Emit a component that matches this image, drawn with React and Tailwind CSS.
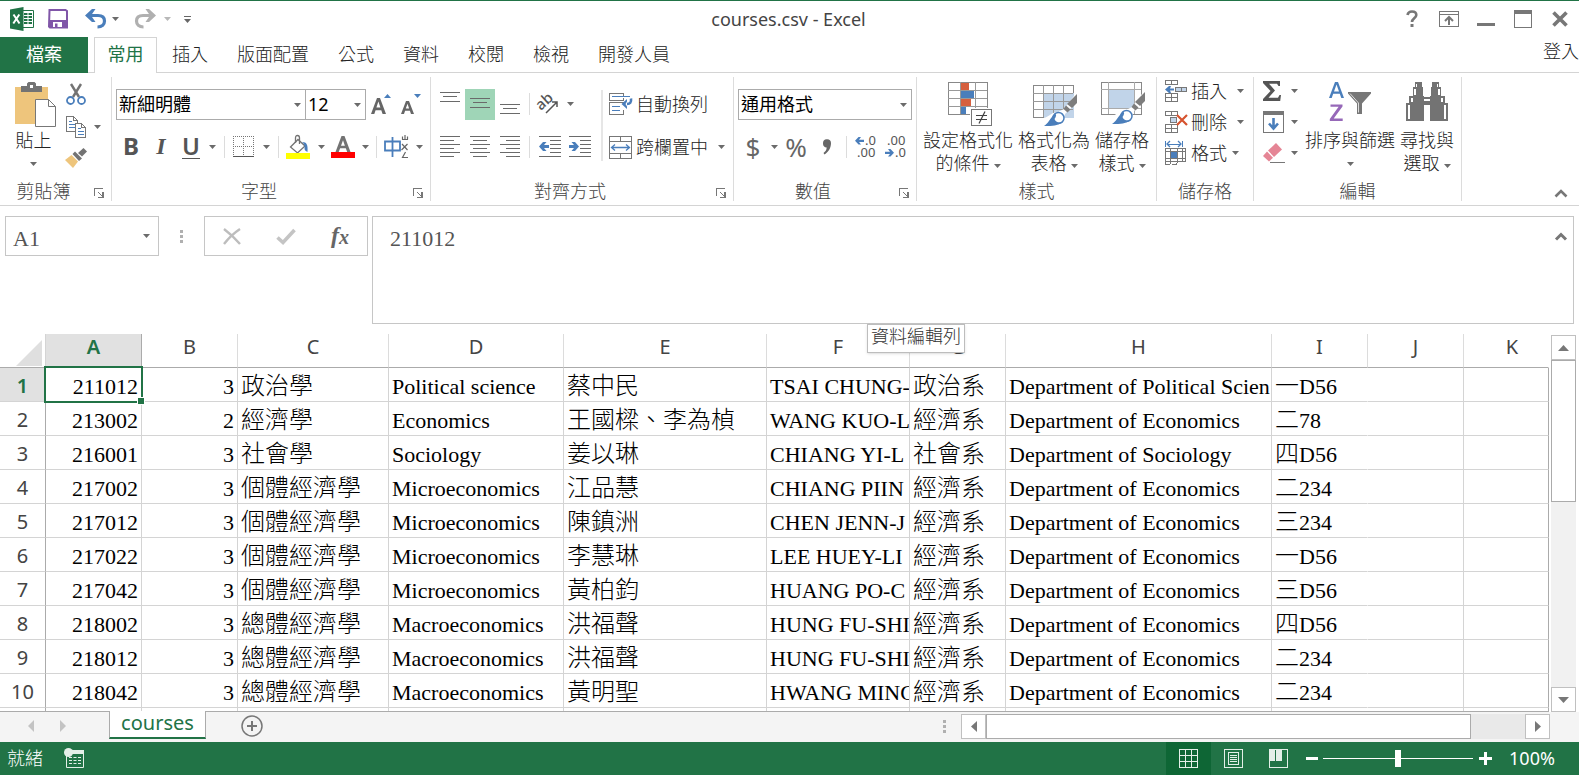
import React from "react";

const ui = "font-['Noto_Sans','Noto_Sans_CJK_TC',sans-serif]";
const serif = "font-['Liberation_Serif','Noto_Sans_CJK_TC',serif]";

/* ---------- small building blocks ---------- */

const Svg = ({ w, h, crisp, children, className = "" }) => (
  <svg
    width={w}
    height={h}
    viewBox={`0 0 ${w} ${h}`}
    fill="none"
    shapeRendering={crisp ? "crispEdges" : "auto"}
    className={`shrink-0 overflow-visible ${className}`}
    aria-hidden="true"
  >
    {children}
  </svg>
);

const Down = ({ color = "#6b6b6b", className = "" }) => (
  <Svg w={7} h={4} className={className}>
    <path d="M0 0h7L3.5 4z" fill={color} />
  </Svg>
);

const IconButton = ({ label, className = "", children }) => (
  <button type="button" aria-label={label} className={`flex shrink-0 items-center justify-center ${className}`}>
    {children}
  </button>
);

const Rule = ({ className = "w-2" }) => (
  <span className={`flex h-[22px] shrink-0 justify-center ${className}`}>
    <span className="w-px bg-[#dcdcdc]" />
  </span>
);

const Group = ({ name, launcher, className, children }) => (
  <section aria-label={name} className={`flex h-[124px] shrink-0 flex-col border-r border-[#dcdcdc] ${className}`}>
    <div className="h-[105px]">{children}</div>
    <div className="flex h-[19px] items-center">
      <span className="flex-1 text-center text-lg font-light leading-[19px] text-[#444]">{name}</span>
      {launcher && (
        <IconButton label={`${name} options`} className="mt-[2px] h-4 w-6">
          <Svg w={10} h={10} crisp>
            <path d="M.5 8V.5H9" stroke="#777" />
            <path d="M4 4l4 4" stroke="#777" shapeRendering="auto" />
            <path d="M9.5 4v6H4V9h4V4z" fill="#777" />
          </Svg>
        </IconButton>
      )}
    </div>
  </section>
);

const BigButton = ({ icon, lines, arrowBelow, className }) => (
  <button type="button" className={`flex shrink-0 flex-col items-center text-lg font-light leading-[23px] text-[#222] ${className}`}>
    <span className="flex h-[47px] items-start">{icon}</span>
    <span className="whitespace-nowrap">{lines[0]}</span>
    <span className="flex h-[23px] items-center gap-1 whitespace-nowrap">
      {lines[1]}
      {arrowBelow ? <Down /> : <Down className="mt-1" />}
    </span>
  </button>
);

/* ---------- icons ---------- */

const ExcelLogo = () => (
  <Svg w={24} h={24}>
    <path d="M13 3.5h10.5v17H13" stroke="#217346" fill="#fff" />
    <path d="M14 6h3.5v2H14zm4.500 0h3.500v2h-3.500zM14 9h3.500v2H14zm4.500 0h3.500v2h-3.500zM14 12h3.500v2H14zm4.500 0h3.500v2h-3.500zM14 15h3.500v2H14zm4.500 0h3.500v2h-3.500z" fill="#217346" />
    <path d="M0 2.500L13.500 0v24L0 21.500z" fill="#217346" />
    <path d="M3.500 7.500l6 9M9.300 7.500l-6 9" stroke="#fff" strokeWidth="2" />
  </Svg>
);

const Save = () => (
  <Svg w={20} h={20}>
    <path d="M1.500 1h16l1.500 1v16.500H2l-1-1z" stroke="#8056a8" strokeWidth="2" fill="#fff" />
    <path d="M1 11h18v8H1z" fill="#8056a8" />
    <path d="M5 13h9v5H5z" fill="#fff" />
    <path d="M7 14.500h2.500V18H7z" fill="#8056a8" />
  </Svg>
);

const Undo = ({ color, flip }) => (
  <Svg w={22} h={20} className={flip ? "-scale-x-100" : ""}>
    <path d="M3 6.500h10c4.500 0 6.500 2.500 6.500 5.500 0 3.500-2.500 6-7 6" stroke={color} strokeWidth="3.200" />
    <path d="M0 6.500L7 0h3.500L6 6.500l4.500 6.500H7z" fill={color} />
  </Svg>
);

const Paste = () => (
  <Svg w={42} h={46}>
    <path d="M0 5h33v37H0z" fill="#eec57c" />
    <path d="M6 10V4h6V1.500L13.500 0h6L21 1.500V4h6v6z" fill="#737373" />
    <path d="M15 3h3v3h-3z" fill="#fff" />
    <path d="M20.500 17.500h13l7 7v20h-20z" fill="#fff" stroke="#777" />
    <path d="M33.500 17.500v7h7" stroke="#777" />
  </Svg>
);

const Scissors = () => (
  <Svg w={20} h={22}>
    <path d="M5 1l8 13M15 1L7 14" stroke="#737373" strokeWidth="2.400" />
    <circle cx="4.500" cy="17.500" r="3.500" stroke="#4a7ebb" strokeWidth="1.800" />
    <circle cx="15.500" cy="17.500" r="3.500" stroke="#4a7ebb" strokeWidth="1.800" />
  </Svg>
);

const Copy = () => (
  <Svg w={21} h={22} crisp>
    <path d="M.5.5h7l4 4v11H.5z" fill="#fff" stroke="#777" />
    <path d="M7.500.5v4h4" stroke="#777" />
    <path d="M3 5.500h3M3 8.500h6M3 11.500h6" stroke="#4a7ebb" />
    <path d="M9.500 7.500h6l4 4v10h-10z" fill="#fff" stroke="#777" />
    <path d="M15.500 7.500v4h4" stroke="#777" />
    <path d="M12 12.500h3M12 15.500h6M12 18.500h6" stroke="#4a7ebb" />
  </Svg>
);

const FormatBrush = () => (
  <Svg w={22} h={20}>
    <path d="M18.500 0L22 3.500l-5 5L13 5z" fill="#737373" />
    <path d="M10 3.500l7 7-3 2.500-6.500-7z" fill="#737373" />
    <path d="M6.500 7L13 13.500 8 20 0 12z" fill="#eec57c" />
  </Svg>
);

const Lines = ({ rows, h = 22 }) => (
  <Svg w={20} h={h} crisp>
    {rows.map(([x, y, w]) => (
      <rect key={y} x={x} y={y} width={w} height="1" fill="#6a6a6a" />
    ))}
  </Svg>
);

const BorderIcon = () => (
  <Svg w={22} h={22} crisp>
    <path d="M0 .5h21M.5 0v20M20.500 0v20M10.500 0v20M0 10.500h21" stroke="#777" strokeDasharray="1 1" />
    <path d="M0 20.500h21" stroke="#555" />
  </Svg>
);

const FillIcon = () => (
  <Svg w={24} h={25}>
    <path d="M4.500 12L12 4.500l7 6.500-7.500 7z" stroke="#737373" strokeWidth="1.300" fill="#fff" />
    <path d="M9.500 8V3q0-2.500 2-2.500t2 2.500v6" stroke="#737373" strokeWidth="1.300" />
    <path d="M16 7c5 0 6 3 5.500 10-1-1-2.500-1-3-3 .5-3 0-5-2.500-7z" fill="#4a7ebb" />
    <path d="M0 18h24v6H0z" fill="#ff0" />
  </Svg>
);

const FontColor = () => (
  <Svg w={24} h={24}>
    <path d="M4.500 17L10.500 1h3l6 16h-3.300l-1.400-3.800H9.100L7.700 17zM10 10.700h3.900L12 5.300z" fill="#737373" />
    <path d="M0 17h24v6H0z" fill="#f00" />
  </Svg>
);

const Orientation = () => (
  <Svg w={22} h={22}>
    <text x="-1" y="14" fontSize="15" fontFamily="Noto Sans" fontWeight="500" fill="#555" transform="rotate(-42 6 11)">ab</text>
    <path d="M8 20L18.500 9.500M14 9h5v5" stroke="#555" strokeWidth="1.500" />
  </Svg>
);

const Indent = ({ right }) => (
  <Svg w={22} h={22} crisp>
    <path d="M0 .5h22M11 4.500h11M11 8.500h11M11 12.500h11M11 16.500h11M0 20.500h22" stroke="#6a6a6a" />
    {right ? (
      <path d="M0 9h5L2.500 6H6l4 4.500L6 15H2.500L5 12H0z" fill="#4a7ebb" shapeRendering="auto" />
    ) : (
      <path d="M10 9H5l2.500-3H4L0 10.500 4 15h3.500L5 12h5z" fill="#4a7ebb" shapeRendering="auto" />
    )}
  </Svg>
);

const Wrap = () => (
  <Svg w={24} h={22}>
    <g shapeRendering="crispEdges">
      <path d="M14.500 3V.5H.5v7h14V5M14.500 12V9.500H.5v12h14V17" stroke="#777" />
      <path d="M3 3.500h18M3 13.500h8M3 17.500h8" stroke="#4a7ebb" />
    </g>
    <path d="M22 5.500c.5 4-1 5.500-4 5.500" stroke="#4a7ebb" strokeWidth="2.600" />
    <path d="M12.500 11L18 6v2.500L16.500 11l1.500 2.500V16z" fill="#4a7ebb" />
  </Svg>
);

const Merge = () => (
  <Svg w={23} h={23}>
    <g shapeRendering="crispEdges" stroke="#777">
      <path d="M.5.5h22v22H.5zM.5 5.500h22M.5 17.500h22M11.500 0v5M11.500 18v5" />
    </g>
    <path d="M3 11.500h17M6 8.500l-3.500 3L6 14.500M17 8.500l3.500 3-3.500 3" stroke="#4a7ebb" strokeWidth="1.300" />
  </Svg>
);

const Decimal = ({ inc }) => (
  <Svg w={24} h={24}>
    <g fontFamily="Noto Sans" fontSize="13" fill="#555">
      <text x={inc ? 11 : 3} y="10">{inc ? ".0" : ".00"}</text>
      <text x={inc ? 3 : 11} y="22">{inc ? ".00" : ".0"}</text>
    </g>
    {inc ? (
      <path d="M10 4.700H5L7 2H4.500L1 5.800l3.500 3.700H7L5 6.900h5z" fill="#4a7ebb" />
    ) : (
      <path d="M1 16.700h5L4 14h2.500l3.500 3.800-3.500 3.700H4l2-2.600H1z" fill="#4a7ebb" />
    )}
  </Svg>
);

const CondFormat = () => (
  <Svg w={40} h={44} crisp>
    <path d="M.5.500h39v32H.5z" fill="#fff" stroke="#888" />
    <path d="M12.500 0v32M27.500 0v32M0 8.500h39M0 16.500h39M0 24.500h39" stroke="#999" />
    <path d="M13 1h8v7h-8zM13 17h10v7H13z" fill="#d6603f" />
    <path d="M13 9h13v7H13zM13 25h5v7h-5z" fill="#4a7ebb" />
    <path d="M22 26h22v18H22z" fill="#fff" />
    <path d="M23.500 27.500h20v16h-20z" fill="#fff" stroke="#777" />
    <path d="M28 33.500h11M28 37.500h11" stroke="#444" />
    <path d="M37 29.500l-6 12" stroke="#444" strokeWidth="1.300" shapeRendering="auto" />
  </Svg>
);

const Brush = () => (
  <g>
    <path d="M11 34c6-2 8-6 14-6l6-3L44 8v10L32 30c0 8-6 12-14 13H9z" fill="#fff" />
    <path d="M44 10v9l-5 5-5-4z" fill="#7d7d7d" />
    <path d="M33 21.500l4.500 4-3 3-4-3.500z" fill="#7d7d7d" />
    <circle cx="25.500" cy="34" r="5.500" fill="#fff" stroke="#4a7ebb" strokeWidth="1.500" />
    <path d="M11 42c4-2 6-8 11-12 2 0 1 3-.5 5 1 3 4 4 7 3-2 3-8 4.500-17.500 4z" fill="#4a7ebb" />
  </g>
);

const FormatTable = () => (
  <Svg w={42} h={45}>
    <g transform="translate(0 2)">
      <g shapeRendering="crispEdges">
        <path d="M.5 1.500h40v32H.5z" fill="#fff" stroke="#888" />
        <path d="M11 9h30v25H11z" fill="#c1d4e9" />
        <path d="M10.500 1v32M20.500 1v32M30.500 1v32M0 9.500h40M0 17.500h40M0 25.500h40" stroke="#999" />
      </g>
      <Brush />
    </g>
  </Svg>
);

const CellStyle = () => (
  <Svg w={42} h={44}>
    <g shapeRendering="crispEdges">
      <path d="M.5.500h40v32H.5z" fill="#fff" stroke="#888" />
      <path d="M8 8h26v18H8z" fill="#c1d4e9" />
      <path d="M7.500 0v32M33.500 0v32M0 7.500h40M0 26.500h40" stroke="#aaa" />
    </g>
    <Brush />
  </Svg>
);

const InsertCells = () => (
  <Svg w={22} h={22} crisp>
    <path d="M.5.500h12v4H.5zM6.500 0v4M.5 13.500h12v8H.5zM.5 17.500h12M6.500 13v8" stroke="#777" />
    <path d="M10.500 7.500h11v4h-11z" fill="#c1d4e9" stroke="#777" />
    <path d="M16.500 7v5" stroke="#777" />
    <path d="M9 8.500H5L6 6H4L0 9.500 4 13h2l-1-2.500h4z" fill="#4a7ebb" shapeRendering="auto" />
  </Svg>
);

const DeleteCells = () => (
  <Svg w={24} h={22} crisp>
    <path d="M.5.500h12v4H.5zM6.500 0v4M.5 13.500h12v8H.5zM.5 17.500h12M6.500 13v8" stroke="#777" />
    <path d="M5.500 6.500h6v5h-6z" fill="#c1d4e9" stroke="#777" />
    <path d="M12 4l10 10M22 4L12 14" stroke="#d6532f" strokeWidth="2.200" shapeRendering="auto" />
  </Svg>
);

const FormatCells = () => (
  <Svg w={22} h={24} crisp>
    <path d="M.5 0v6M17.500 0v6M2 3h14" stroke="#4a7ebb" />
    <path d="M5 0L2 3l3 3M13 0l3 3-3 3" stroke="#4a7ebb" strokeWidth="1.300" shapeRendering="auto" />
    <path d="M.5 7.500h20v13H.5zM5.500 7v13M12.500 7v13M17.500 7v13M0 10.500h21M0 17.500h21M.5 20v3.500h4l2-3M7 23.500h4l2-3" stroke="#777" />
    <path d="M6 11h6v6H6z" fill="#4a7ebb" />
  </Svg>
);

const Sigma = () => (
  <Svg w={18} h={20}>
    <path d="M0 0h17v5h-1.500L14 2.700H6l6 6.800-6.500 7.300H15l1.500-2.800H18L17.200 20H0v-2l7.500-8L0 2z" fill="#555" />
  </Svg>
);

const FillDown = () => (
  <Svg w={21} h={22}>
    <path d="M.5.500h20v21H.5z" stroke="#777" shapeRendering="crispEdges" />
    <path d="M0 0h21v4H0z" fill="#777" />
    <path d="M10.500 7v10M6 12.500l4.500 5 4.500-5" stroke="#4a7ebb" strokeWidth="2.600" />
  </Svg>
);

const Eraser = () => (
  <Svg w={22} h={20}>
    <path d="M13 0l6 6.500L11 14 5 7.500z" fill="#e58595" />
    <path d="M4 8.500l6 6.300L6 18.500l-6-5.500z" fill="#e58595" />
    <path d="M7 19.500h15" stroke="#777" />
  </Svg>
);

const SortFilter = () => (
  <Svg w={42} h={40}>
    <path d="M0 16L6 0h3l6 16h-2.700l-1.500-4.300H4.200L2.700 16zM5 9.400h5L7.500 2.600z" fill="#4a7ebb" />
    <path d="M1.500 22.500h12v2L4.700 36.600h9V39H.8v-2.100l8.800-12.100H1.500z" fill="#9668b8" />
    <path d="M19 10h23v1.500l-9 10V32h-5V21.500l-9-10z" fill="#777" />
    <path d="M21 11.500l8.500 9.500v9.500" stroke="#ddd" />
  </Svg>
);

const Binoculars = () => (
  <Svg w={42} h={40} crisp>
    <path d="M9 0h7v5h1v9h1v1h6v-1h1V5h1V0h7v5h2v9h4v7h3v18H24V23h-6v16H0V21h3v-7h4V5h2z" fill="#737373" />
    <path d="M18 17h6v2h-6z" fill="#fff" />
    <path d="M2 23h2v14H2zM38 23h2v14h-2zM5 16h2v4H5zM35 16h2v4h-2zM8 7h2v6H8zM32 7h2v6h-2zM10 2h1v3h-1zM31 2h1v3h-1z" fill="#fff" />
  </Svg>
);

/* ---------- window parts ---------- */

const TitleBar = () => (
  <header className="relative flex h-[37px] shrink-0 items-center border-t border-[#217346] pl-[10px]">
    <ExcelLogo />
    <IconButton label="儲存" className="ml-[10px] h-7 w-7"><Save /></IconButton>
    <IconButton label="復原" className="ml-3 h-7 w-6"><Undo color="#4a7ebb" /></IconButton>
    <IconButton label="復原選項" className="h-7 w-[15px]"><Down /></IconButton>
    <IconButton label="重做" className="ml-[10px] h-7 w-6"><Undo color="#b0b0b0" flip /></IconButton>
    <IconButton label="重做選項" className="ml-[2px] h-7 w-4"><Down color="#b8b8b8" /></IconButton>
    <IconButton label="自訂快速存取工具列" className="ml-[2px] h-7 w-5">
      <Svg w={7} h={7}><path d="M0 .500h7" stroke="#666" /><path d="M0 3h7L3.500 7z" fill="#666" /></Svg>
    </IconButton>
    <h1 className="pointer-events-none absolute inset-x-0 pr-[2px] text-center text-lg leading-6 text-[#444]">courses.csv - Excel</h1>
    <div className="ml-auto flex items-center pr-px">
      <IconButton label="說明" className="h-7 w-[37px]">
        <Svg w={12} h={18}>
          <path d="M1.500 5C2 2.500 3.500 1.500 6 1.500c2.700 0 4.300 1.300 4.300 3.500 0 3.200-4.300 3.500-4.300 7" stroke="#777" strokeWidth="2.600" />
          <path d="M4.500 14h3v3h-3z" fill="#777" />
        </Svg>
      </IconButton>
      <IconButton label="功能區顯示選項" className="h-7 w-[37px]">
        <Svg w={20} h={16}>
          <path d="M.5.500h19v15H.5zM0 3.500h20" stroke="#777" shapeRendering="crispEdges" />
          <path d="M10 14V7M6 10l4-4 4 4" stroke="#777" strokeWidth="2" />
        </Svg>
      </IconButton>
      <IconButton label="最小化" className="h-7 w-[37px]">
        <Svg w={18} h={16} crisp><path d="M0 12h18v3H0z" fill="#777" /></Svg>
      </IconButton>
      <IconButton label="最大化" className="h-7 w-[37px]">
        <Svg w={18} h={18} crisp><path d="M.5.500h17v17H.5z" stroke="#777" /><path d="M0 0h18v4H0z" fill="#777" /></Svg>
      </IconButton>
      <IconButton label="關閉" className="h-7 w-[37px]">
        <Svg w={16} h={16}><path d="M1.500 1.500l13 13M14.500 1.500l-13 13" stroke="#777" strokeWidth="3.600" /></Svg>
      </IconButton>
    </div>
  </header>
);

const Tabs = () => (
  <nav className="flex h-9 shrink-0 items-stretch border-b border-[#d4d4d4] text-lg font-light leading-6 text-[#222]">
    <button type="button" className="-mb-px w-[88px] bg-[#217346] pb-[3px] font-normal text-white">檔案</button>
    <button type="button" className="-mb-px ml-[6px] w-[63px] border border-b-0 border-[#d4d4d4] bg-white pb-[3px] font-normal text-[#217346]">常用</button>
    <div className="ml-px flex gap-px">
      {["插入", "版面配置", "公式", "資料", "校閱", "檢視", "開發人員"].map((t) => (
        <button key={t} type="button" className="px-[14px] pb-[2px]">{t}</button>
      ))}
    </div>
    <button type="button" className="ml-auto self-start leading-7">登入</button>
  </nav>
);

const Picker = ({ label, value, className }) => (
  <span className={`relative flex h-[31px] shrink-0 ${className}`}>
    <select aria-label={label} defaultValue={value} className="w-full appearance-none border border-[#ababab] bg-white pb-[2px] pl-[2px] text-lg text-black outline-none">
      <option>{value}</option>
    </select>
    <Down className="pointer-events-none absolute right-[5px] top-[14px]" />
  </span>
);

const Ribbon = () => (
  <div className="flex h-[133px] shrink-0 items-start overflow-hidden border-b border-[#d4d4d4] pt-1">
    <Group name="剪貼簿" launcher className="w-[112px]">
      <div className="flex pl-[11px] pt-[5px]">
        <BigButton icon={<span className="pl-[5px]"><Paste /></span>} lines={["貼上", ""]} className="w-[45px]" arrowBelow />
        <div className="flex flex-col pl-[6px]">
          <IconButton label="剪下" className="h-6 w-7"><Scissors /></IconButton>
          <div className="mt-[7px] flex">
            <IconButton label="複製" className="h-7 w-7"><Copy /></IconButton>
            <IconButton label="複製選項" className="h-7 w-[14px]"><Down /></IconButton>
          </div>
          <IconButton label="複製格式" className="mt-[5px] h-6 w-7"><FormatBrush /></IconButton>
        </div>
      </div>
    </Group>

    <Group name="字型" launcher className="w-[319px]">
      <div className="flex flex-col gap-[11px] pl-1 pt-3">
        <div className="flex h-[31px] items-center">
          <Picker label="字型" value="新細明體" className="w-[190px]" />
          <Picker label="字型大小" value="12" className="-ml-px w-[61px]" />
          <IconButton label="放大字型" className="ml-[3px] h-7 w-6">
            <Svg w={20} h={22}>
              <path d="M0 20L6 4h3l6 16h-3.400l-1.300-3.800H4.600L3.300 20zM5.400 13.500h4L7.400 7.500z" fill="#666" />
              <path d="M13 4l3.500-4L20 4z" fill="#4a7ebb" />
            </Svg>
          </IconButton>
          <IconButton label="縮小字型" className="ml-[6px] h-7 w-6">
            <Svg w={20} h={22}>
              <path d="M0 20L5 7h3l5 13h-3l-1.100-3.300H4.100L3 20zM4.800 14.500h3.300L6.500 9.700z" fill="#666" />
              <path d="M13 0l3.500 4L20 0z" fill="#4a7ebb" />
            </Svg>
          </IconButton>
        </div>
        <div className="flex h-8 items-center text-2xl leading-[30px] text-[#555]">
          <IconButton label="粗體" className="w-[30px] pb-[2px] font-bold">B</IconButton>
          <IconButton label="斜體" className="w-[30px] pb-[2px] font-['Liberation_Serif'] font-bold italic">I</IconButton>
          <IconButton label="底線" className="w-[30px] pb-[2px]">
            <span className="border-b border-[#555] font-semibold leading-6">U</span>
          </IconButton>
          <IconButton label="底線選項" className="h-8 w-3"><Down /></IconButton>
          <Rule className="w-3" />
          <IconButton label="框線" className="h-8 w-7"><BorderIcon /></IconButton>
          <IconButton label="框線選項" className="h-8 w-4"><Down /></IconButton>
          <Rule />
          <IconButton label="填滿色彩" className="h-8 w-8"><FillIcon /></IconButton>
          <IconButton label="填滿色彩選項" className="h-8 w-[14px]"><Down /></IconButton>
          <IconButton label="字型色彩" className="h-8 w-[30px]"><FontColor /></IconButton>
          <IconButton label="字型色彩選項" className="h-8 w-[14px]"><Down /></IconButton>
          <Rule />
          <IconButton label="顯示注音標示欄位" className="h-8 w-8">
            <Svg w={24} h={24}>
              <path d="M1 6.500h15v9H1zM8.500 2v20" stroke="#4a7ebb" strokeWidth="1.800" />
              <path d="M18 4.500h6M21 0v4M18.500 1.500v3M23.500 1.500v3M18 9l5.500 6M23.500 9l-6 6M21.500 17l-3 5.500h5.500" stroke="#666" strokeWidth="1.200" />
            </Svg>
          </IconButton>
          <IconButton label="注音選項" className="h-8 w-[14px]"><Down /></IconButton>
        </div>
      </div>
    </Group>

    <Group name="對齊方式" launcher className="w-[303px]">
      <div className="flex pl-1 pt-[11px]">
        <div className="flex w-[166px] flex-col gap-[11px]">
          <div className="flex h-8 items-center">
            <IconButton label="靠上對齊" className="h-[31px] w-[30px]"><Lines rows={[[0, 1, 20], [3, 5, 14], [0, 10, 20]]} h={26} /></IconButton>
            <IconButton label="置中對齊" className="h-[31px] w-[30px] bg-[#9fd5b7]"><Lines rows={[[0, 7, 20], [3, 11, 14], [0, 16, 20]]} h={26} /></IconButton>
            <IconButton label="靠下對齊" className="h-[31px] w-[30px]"><Lines rows={[[0, 13, 20], [3, 17, 14], [0, 22, 20]]} h={26} /></IconButton>
            <Rule />
            <IconButton label="方向" className="h-8 w-8"><Orientation /></IconButton>
            <IconButton label="方向選項" className="h-8 w-[10px]"><Down /></IconButton>
          </div>
          <div className="flex h-8 items-center">
            <IconButton label="靠左對齊" className="h-8 w-[30px]"><Lines rows={[[0, 0, 20], [0, 4, 14], [0, 8, 20], [0, 12, 14], [0, 16, 20], [0, 20, 14]]} /></IconButton>
            <IconButton label="置中" className="h-8 w-[30px]"><Lines rows={[[0, 0, 20], [3, 4, 14], [0, 8, 20], [3, 12, 14], [0, 16, 20], [3, 20, 14]]} /></IconButton>
            <IconButton label="靠右對齊" className="h-8 w-[30px]"><Lines rows={[[0, 0, 20], [6, 4, 14], [0, 8, 20], [6, 12, 14], [0, 16, 20], [6, 20, 14]]} /></IconButton>
            <Rule />
            <IconButton label="減少縮排" className="ml-[2px] h-8 w-[30px]"><Indent /></IconButton>
            <IconButton label="增加縮排" className="h-8 w-[30px]"><Indent right /></IconButton>
          </div>
        </div>
        <span className="my-[2px] w-[2px] bg-[#e6e6e6]" />
        <div className="flex flex-1 flex-col gap-[11px] pl-[6px] text-lg font-light text-[#222]">
          <button type="button" className="flex h-8 items-center gap-[3px] whitespace-nowrap"><Wrap />自動換列</button>
          <button type="button" className="flex h-8 items-center gap-1 whitespace-nowrap"><Merge />跨欄置中<Down className="ml-[6px]" /></button>
        </div>
      </div>
    </Group>

    <Group name="數值" launcher className="w-[183px]">
      <div className="flex flex-col gap-[11px] px-1 pt-3">
        <Picker label="數值格式" value="通用格式" className="w-full" />
        <div className="flex h-8 items-center text-[26px] leading-8 text-[#666]">
          <IconButton label="會計數字格式" className="w-[30px]">$</IconButton>
          <IconButton label="會計選項" className="h-8 w-3"><Down /></IconButton>
          <IconButton label="百分比樣式" className="w-8">%</IconButton>
          <IconButton label="千分位樣式" className="h-8 w-[30px]">
            <Svg w={10} h={16}><path d="M1 4.500a4 4 0 0 1 8-.5c0 5-2.500 9-6.500 11.500L1.500 14c2-1.500 3-3 3.200-5.500A4 4 0 0 1 1 4.500z" fill="#666" /></Svg>
          </IconButton>
          <Rule />
          <IconButton label="增加小數位數" className="h-8 w-[31px]"><Decimal inc /></IconButton>
          <IconButton label="減少小數位數" className="h-8 w-[30px]"><Decimal /></IconButton>
        </div>
      </div>
    </Group>

    <Group name="樣式" className="w-[240px]">
      <div className="flex pl-[3px] pt-[5px]">
        <BigButton className="w-24" icon={<CondFormat />} lines={["設定格式化", "的條件"]} />
        <BigButton className="w-[76px]" icon={<FormatTable />} lines={["格式化為", "表格"]} />
        <BigButton className="w-[60px]" icon={<CellStyle />} lines={["儲存格", "樣式"]} />
      </div>
    </Group>

    <Group name="儲存格" className="w-[97px]">
      <div className="-mt-[2px] flex flex-col pl-2 text-lg font-light text-[#222]">
        {[["插入", InsertCells], ["刪除", DeleteCells], ["格式", FormatCells]].map(([t, Icon]) => (
          <button key={t} type="button" className="flex h-[31px] items-center whitespace-nowrap">
            <span className="w-[26px]"><Icon /></span>
            {t}
            <Down className={t === "格式" ? "ml-[5px]" : "ml-[10px]"} />
          </button>
        ))}
      </div>
    </Group>

    <Group name="編輯" className="w-[208px]">
      <div className="flex">
        <div className="-mt-[2px] flex w-[50px] flex-col pl-[9px]">
          {[["自動加總", Sigma], ["填滿", FillDown], ["清除", Eraser]].map(([t, Icon]) => (
            <button key={t} type="button" aria-label={t} className="flex h-[31px] items-center">
              <span className="flex w-7 justify-start"><Icon /></span>
              <Down />
            </button>
          ))}
        </div>
        <div className="flex pt-[5px]">
          <BigButton className="w-[92px]" icon={<SortFilter />} lines={["排序與篩選", ""]} arrowBelow />
          <BigButton className="w-[62px]" icon={<Binoculars />} lines={["尋找與", "選取"]} />
        </div>
      </div>
    </Group>

    <IconButton label="摺疊功能區" className="ml-auto mr-1 h-6 w-7 self-end">
      <Svg w={14} h={9}><path d="M1.500 7.500L7 2l5.500 5.500" stroke="#777" strokeWidth="2.600" /></Svg>
    </IconButton>
  </div>
);

const Dots = () => (
  <Svg w={3} h={13} crisp><path d="M0 0h3v3H0zM0 5h3v3H0zM0 10h3v3H0z" fill="#b0b0b0" /></Svg>
);

const FormulaBar = () => (
  <div className="relative flex h-32 shrink-0 items-start pb-[11px] pl-[5px] pr-[5px] pt-[10px]">
    <label className="flex h-10 w-[154px] shrink-0 items-center border border-[#c6c6c6] pr-2">
      <input aria-label="名稱方塊" defaultValue="A1" className={`w-0 flex-1 pl-[7px] pt-1 text-[22px] text-[#555] outline-none ${serif}`} />
      <Down />
    </label>
    <span className="flex h-10 w-[45px] shrink-0 items-center justify-center"><Dots /></span>
    <div className="flex h-10 w-[164px] shrink-0 items-center justify-around border border-[#c6c6c6]">
      <IconButton label="取消" className="h-8 w-11">
        <Svg w={18} h={17}><path d="M1 1q8 6 16 15M17 1Q8 7 1 16" stroke="#bdbdbd" strokeWidth="2.400" /></Svg>
      </IconButton>
      <IconButton label="輸入" className="h-8 w-11">
        <Svg w={20} h={17}><path d="M1.500 9.500l5.500 5L18.500 2" stroke="#c4c4c4" strokeWidth="3.600" /></Svg>
      </IconButton>
      <IconButton label="插入函數" className="h-8 w-11 pb-[2px] font-['Liberation_Serif'] text-2xl italic text-[#666]">
        <span className="font-bold">f</span><span className="pt-1 text-xl font-bold">x</span>
      </IconButton>
    </div>
    <textarea
      aria-label="資料編輯列"
      defaultValue="211012"
      className={`ml-1 h-[108px] w-0 flex-1 resize-none border border-[#c6c6c6] pl-[17px] pt-2 text-[22px] leading-7 text-[#555] outline-none ${serif}`}
    />
    <IconButton label="摺疊資料編輯列" className="absolute right-1 top-[18px] h-6 w-7">
      <Svg w={12} h={9}><path d="M1 7.500l5-5 5 5" stroke="#777" strokeWidth="3" /></Svg>
    </IconButton>
    <div role="tooltip" className="absolute left-[867px] top-[118px] z-10 h-[29px] border border-[#bdbdbd] bg-white px-[3px] text-lg font-light leading-[22px] text-[#333] shadow">
      資料編輯列
    </div>
  </div>
);

const cols = [
  ["A", "w-24"], ["B", "w-24"], ["C", "w-[151px]"], ["D", "w-[175px]"], ["E", "w-[203px]"], ["F", "w-[143px]"],
  ["G", "w-24"], ["H", "w-[266px]"], ["I", "w-24"], ["J", "w-24"], ["K", ""],
];

const data = [
  ["211012", "3", "政治學", "Political science", "蔡中民", "TSAI CHUNG-", "政治系", "Department of Political Scien", "一D56"],
  ["213002", "2", "經濟學", "Economics", "王國樑、李為楨", "WANG KUO-L", "經濟系", "Department of Economics", "二78"],
  ["216001", "3", "社會學", "Sociology", "姜以琳", "CHIANG YI-L", "社會系", "Department of Sociology", "四D56"],
  ["217002", "3", "個體經濟學", "Microeconomics", "江品慧", "CHIANG PIIN", "經濟系", "Department of Economics", "二234"],
  ["217012", "3", "個體經濟學", "Microeconomics", "陳鎮洲", "CHEN JENN-J", "經濟系", "Department of Economics", "三234"],
  ["217022", "3", "個體經濟學", "Microeconomics", "李慧琳", "LEE HUEY-LI", "經濟系", "Department of Economics", "一D56"],
  ["217042", "3", "個體經濟學", "Microeconomics", "黃柏鈞", "HUANG PO-C", "經濟系", "Department of Economics", "三D56"],
  ["218002", "3", "總體經濟學", "Macroeconomics", "洪福聲", "HUNG FU-SHI", "經濟系", "Department of Economics", "四D56"],
  ["218012", "3", "總體經濟學", "Macroeconomics", "洪福聲", "HUNG FU-SHI", "經濟系", "Department of Economics", "二234"],
  ["218042", "3", "總體經濟學", "Macroeconomics", "黃明聖", "HWANG MING", "經濟系", "Department of Economics", "二234"],
  ["", "", "", "", "", "", "", "", ""],
];

/* Han characters are set one step larger and lighter than the Latin text beside them. */
const Mixed = ({ text }) =>
  text.split(/([\u3000-\u9fff]+)/).filter(Boolean).map((part, i) =>
    /[\u3000-\u9fff]/.test(part) ? <span key={i} className="text-2xl font-light leading-none">{part}</span> : part
  );

const Grid = () => (
  <div className="min-w-0 flex-1 overflow-hidden border-b border-[#ababab]">
    <table className="w-full table-fixed border-separate border-spacing-0">
      <colgroup>
        <col className="w-[46px]" />
        {cols.map(([c, w]) => <col key={c} className={w} />)}
      </colgroup>
      <thead>
        <tr className="h-[34px] text-xl leading-6 text-[#444]">
          <th aria-label="全選" className="border-b border-r border-[#ababab] border-r-[#d4d4d4] p-0">
            <Svg w={26} h={26} className="ml-4 mt-1"><path d="M26 0v26H0z" fill="#dfdfdf" /></Svg>
          </th>
          {cols.map(([c]) => (
            <th
              key={c}
              scope="col"
              className={`border-b border-r pb-2 pr-0 pt-0 align-bottom ${
                c === "A"
                  ? "border-[#ababab] bg-[#e1e1e1] pl-0 font-semibold text-[#217346]"
                  : c === "K"
                  ? "border-[#ababab] border-r-transparent pl-3 font-normal"
                  : "border-[#ababab] border-r-[#dcdcdc] pl-0 font-normal"
              }`}
            >
              {c}
            </th>
          ))}
        </tr>
      </thead>
      <tbody className={`text-[22px] text-black ${serif}`}>
        {data.map((row, r) => (
          <tr key={r} className="h-[34px]">
            <th
              scope="row"
              className={`border-b border-r border-[#d4d4d4] border-r-[#ababab] p-0 text-xl ${ui} ${r === 0 ? "bg-[#e1e1e1] font-semibold text-[#217346]" : "font-normal text-[#444]"}`}
            >
              {r < 10 && <div className="h-[33px] pt-[2px] leading-[31px]">{r + 1}</div>}
            </th>
            {cols.map(([c], i) => (
              <td
                key={c}
                className={`relative border-b border-r border-[#d4d4d4] p-0 ${c === "I" ? "border-r-transparent" : ""} ${c === "K" ? "border-r-[#ababab]" : ""}`}
              >
                <div className={`h-[33px] whitespace-nowrap px-[3px] pt-[5px] leading-[28px] ${i < 2 ? "text-right" : ""} ${c === "I" ? "" : "overflow-hidden"}`}>
                  <Mixed text={row[i] || ""} />
                </div>
                {r === 0 && i === 0 && (
                  <>
                    <span className="absolute -inset-[2px] z-10 border-2 border-[#217346]" />
                    <span className="absolute -bottom-1 -right-1 z-20 h-[8px] w-[8px] border border-white bg-[#217346]" />
                  </>
                )}
              </td>
            ))}
          </tr>
        ))}
      </tbody>
    </table>
  </div>
);

const scrollBtn = "flex h-[25px] w-[25px] shrink-0 items-center justify-center border border-[#c0c0c0] bg-white";

const VScroll = () => (
  <div className="flex w-[30px] shrink-0 flex-col pl-[2px] pt-px">
    <button type="button" aria-label="向上捲動" className={scrollBtn}><Svg w={11} h={6}><path d="M0 6h11L5.500 0z" fill="#777" /></Svg></button>
    <div className="w-[25px] flex-1 bg-[#f1f1f1]">
      <div className="h-[142px] border border-[#ababab] bg-white" />
    </div>
    <button type="button" aria-label="向下捲動" className={scrollBtn}><Svg w={11} h={6}><path d="M0 0h11L5.500 6z" fill="#777" /></Svg></button>
  </div>
);

const SheetTabs = () => (
  <div className="flex h-[30px] shrink-0 items-center bg-[#f4f4f4] pb-[2px] pr-[29px]">
    <IconButton label="上一張工作表" className="ml-4 h-7 w-[30px]"><Svg w={6} h={12}><path d="M6 0v12L0 6z" fill="#c3c3c3" /></Svg></IconButton>
    <IconButton label="下一張工作表" className="h-7 w-[34px]"><Svg w={6} h={12}><path d="M0 0v12l6-6z" fill="#c3c3c3" /></Svg></IconButton>
    <button type="button" className="-mt-px ml-[29px] h-[28px] w-[97px] self-start border-x border-b-2 border-[#ababab] border-b-[#217346] bg-white pb-1 text-xl leading-6 text-[#217346]">courses</button>
    <IconButton label="新增工作表" className="ml-[34px] h-7 w-6">
      <Svg w={22} h={22}><circle cx="11" cy="11" r="10" stroke="#777" strokeWidth="1.500" /><path d="M11 6v10M6 11h10" stroke="#777" strokeWidth="2" /></Svg>
    </IconButton>
    <span className="ml-auto w-[18px]"><Dots /></span>
    <div className="flex w-[589px] items-center bg-[#e9e9e9]">
      <button type="button" aria-label="向左捲動" className={scrollBtn}><Svg w={6} h={11}><path d="M6 0v11L0 5.500z" fill="#777" /></Svg></button>
      <div className="flex-1"><div className="h-[25px] w-[90%] border border-[#ababab] bg-white" /></div>
      <button type="button" aria-label="向右捲動" className={scrollBtn}><Svg w={6} h={11}><path d="M0 0v11l6-5.500z" fill="#777" /></Svg></button>
    </div>
  </div>
);

const StatusBar = () => (
  <footer className="flex h-[33px] shrink-0 items-center bg-[#217346] pl-[7px] text-lg leading-6 text-white">
    <span className="pb-[2px] font-light">就緒</span>
    <IconButton label="巨集錄製" className="ml-[19px] h-7 w-6 pb-[2px]">
      <Svg w={20} h={20}>
        <path d="M2.500 8v11.500h17V3" stroke="#e4efe8" />
        <path d="M8 2h12v4H8z" fill="#e4efe8" />
        <circle cx="4.500" cy="4.500" r="4.500" fill="#e4efe8" />
        <path d="M5 9.500h3M9.500 9.500h3M14 9.500h3M5 12.500h3M9.500 12.500h3M14 12.500h3M5 15.500h3M9.500 15.500h3M14 15.500h3" stroke="#e4efe8" />
      </Svg>
    </IconButton>
    <div className="ml-auto flex h-full items-center">
      <IconButton label="標準模式" className="h-full w-[45px] bg-[#0e6635]">
        <Svg w={19} h={19} crisp><path d="M.5.500h18v18H.5zM6.500 0v19M12.500 0v19M0 6.500h19M0 12.500h19" stroke="#e4efe8" /></Svg>
      </IconButton>
      <IconButton label="整頁模式" className="h-full w-[45px]">
        <Svg w={19} h={19} crisp><path d="M.5.500h18v18H.5zM4.500 3.500h10v12h-10zM6 6.500h7M6 8.500h7M6 10.500h7M6 12.500h7" stroke="#e4efe8" /></Svg>
      </IconButton>
      <IconButton label="分頁預覽" className="h-full w-[45px]">
        <Svg w={19} h={19} crisp><path d="M.5.500h18v18H.5z" stroke="#e4efe8" /><path d="M0 0h6v12H0zM7 0h6v12H7z" fill="#e4efe8" /></Svg>
      </IconButton>
      <IconButton label="縮小" className="h-full w-[22px]"><Svg w={12} h={3} crisp><path d="M0 0h12v3H0z" fill="#fff" /></Svg></IconButton>
      <input
        type="range"
        aria-label="顯示比例"
        min="0"
        max="100"
        defaultValue="50"
        className="h-[18px] w-[150px] appearance-none bg-transparent [&::-webkit-slider-runnable-track]:h-px [&::-webkit-slider-runnable-track]:bg-white [&::-webkit-slider-thumb]:-mt-2 [&::-webkit-slider-thumb]:h-[17px] [&::-webkit-slider-thumb]:w-[6px] [&::-webkit-slider-thumb]:appearance-none [&::-webkit-slider-thumb]:bg-white"
      />
      <IconButton label="放大" className="h-full w-6"><Svg w={13} h={13} crisp><path d="M5 0h3v5h5v3H8v5H5V8H0V5h5z" fill="#fff" /></Svg></IconButton>
      <button type="button" className="h-full w-[82px] pb-[2px] pr-3">100%</button>
    </div>
  </footer>
);

export default function App() {
  return (
    <div className={`flex h-screen flex-col overflow-hidden bg-white ${ui}`}>
      <TitleBar />
      <Tabs />
      <Ribbon />
      <FormulaBar />
      <main className="flex min-h-0 flex-1">
        <Grid />
        <VScroll />
      </main>
      <SheetTabs />
      <StatusBar />
    </div>
  );
}
